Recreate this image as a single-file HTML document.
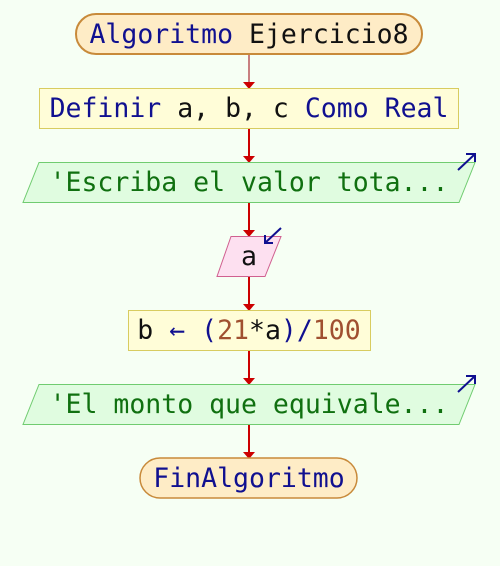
<!DOCTYPE html>
<html><head><meta charset="utf-8"><style>
html,body{margin:0;padding:0;background:#f6fff4;}
svg{display:block}
text{font-family:"DejaVu Sans Mono","Liberation Mono",monospace;font-size:26.5px;}
</style></head><body>
<svg width="500" height="566" viewBox="0 0 500 566" xmlns="http://www.w3.org/2000/svg">
<rect width="500" height="566" fill="#f6fff4"/>
<line x1="249" y1="54" x2="249" y2="84" stroke="#c88080" stroke-width="2"/>
<polygon points="243,82 255,82 249,89" fill="#cc0000"/>
<g stroke="#cc0000" stroke-width="2">
<line x1="249" y1="128" x2="249" y2="158"/>
<line x1="249" y1="202" x2="249" y2="232"/>
<line x1="249" y1="276" x2="249" y2="306"/>
<line x1="249" y1="350" x2="249" y2="380"/>
<line x1="249" y1="424" x2="249" y2="454"/>
</g>
<g fill="#cc0000">
<polygon points="243,156 255,156 249,163"/>
<polygon points="243,230 255,230 249,237"/>
<polygon points="243,304 255,304 249,311"/>
<polygon points="243,378 255,378 249,385"/>
<polygon points="243,452 255,452 249,459"/>
</g>
<rect x="76" y="14" width="346" height="40" rx="20" fill="#feecc6" stroke="#c88a3a" stroke-width="2"/>
<text x="249" y="43" text-anchor="middle"><tspan fill="#101090">Algoritmo</tspan><tspan fill="#111"> Ejercicio8</tspan></text>
<rect x="39.5" y="88.5" width="419" height="40" fill="#fffdd8" stroke="#d8cc60"/>
<text x="249" y="117" text-anchor="middle"><tspan fill="#101090">Definir</tspan><tspan fill="#111"> a, b, c </tspan><tspan fill="#101090">Como Real</tspan></text>
<polygon points="39,162.5 475,162.5 459,202.5 23,202.5" fill="#e0fce0" stroke="#70cc70"/>
<text x="249" y="191" text-anchor="middle" fill="#107010">'Escriba el valor tota...</text>
<path d="M458,170 L475,154 M466,154 L475,154 L475,162" stroke="#101090" stroke-width="2" fill="none"/>
<polygon points="231,236.5 281,236.5 265,276.5 217,276.5" fill="#fde0f0" stroke="#d06090"/>
<text x="249" y="265" text-anchor="middle" fill="#111">a</text>
<path d="M281,228 L265,243 M265,235 L265,243 L273,243" stroke="#101090" stroke-width="2" fill="none"/>
<rect x="128.5" y="310.5" width="242" height="40" fill="#fffdd8" stroke="#d8cc60"/>
<text x="249" y="339" text-anchor="middle"><tspan fill="#111">b </tspan><tspan fill="#101090">← (</tspan><tspan fill="#a05030">21</tspan><tspan fill="#111">*a</tspan><tspan fill="#101090">)/</tspan><tspan fill="#a05030">100</tspan></text>
<polygon points="39,384.5 475,384.5 459,424.5 23,424.5" fill="#e0fce0" stroke="#70cc70"/>
<text x="249" y="413" text-anchor="middle" fill="#107010">'El monto que equivale...</text>
<path d="M458,392 L475,376 M466,376 L475,376 L475,384" stroke="#101090" stroke-width="2" fill="none"/>
<rect x="140" y="458" width="217" height="40" rx="20" fill="#feecc6" stroke="#c88a3a" stroke-width="1.5"/>
<text x="249" y="487" text-anchor="middle" fill="#101090">FinAlgoritmo</text>
</svg>
</body></html>
